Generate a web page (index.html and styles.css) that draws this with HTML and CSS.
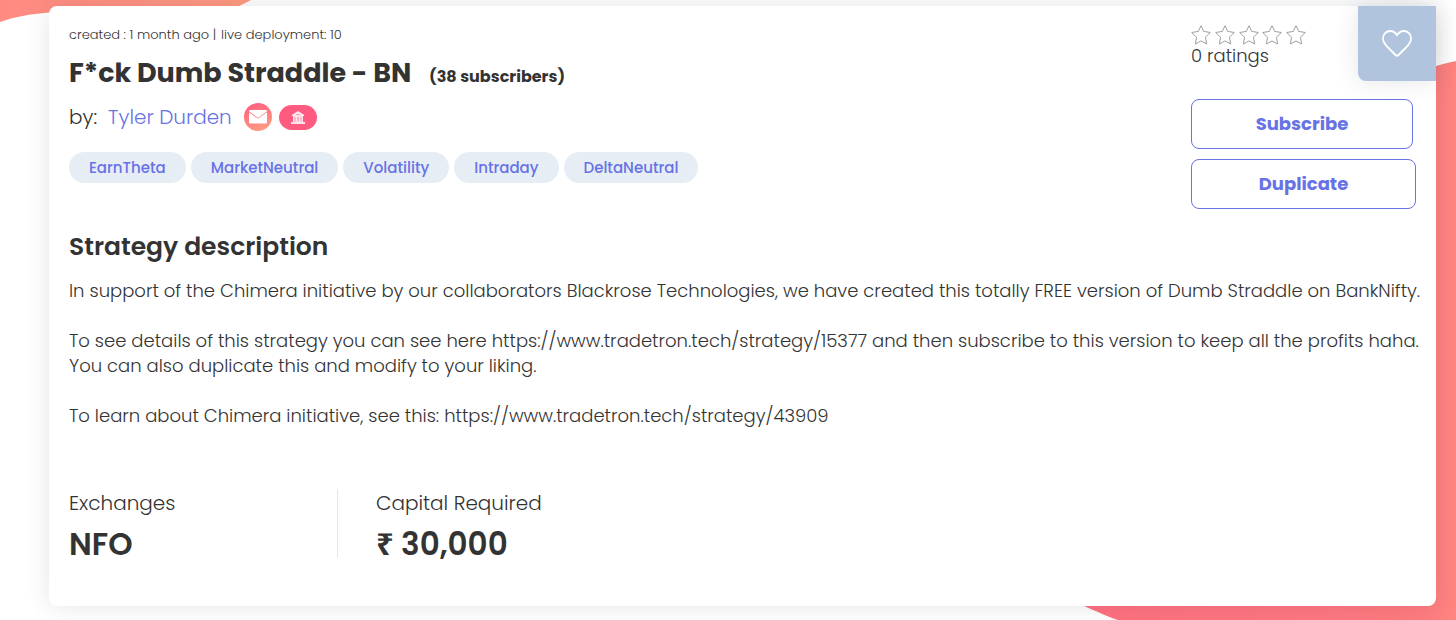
FILE: index.html
```html
<!DOCTYPE html>
<html lang="en">
<head>
<meta charset="utf-8">
<meta name="viewport" content="width=device-width, initial-scale=1">
<title>F*ck Dumb Straddle - BN</title>
<link rel="stylesheet" href="styles.css">
</head>
<body>
<svg class="blob blob-left" viewBox="0 0 260 30" aria-hidden="true">
  <defs><linearGradient id="coral" x1="0" y1="0" x2="1" y2="0"><stop offset="0" stop-color="#ff8a82"/><stop offset="1" stop-color="#ff9a80"/></linearGradient></defs>
  <path fill="url(#coral)" d="M0 0H251C240 6 225 14 190 17C150 20 85 10 49 12.500C30 14 14 17 0 22Z"/>
</svg>
<svg class="blob blob-right" viewBox="0 0 380 560" aria-hidden="true">
  <defs><linearGradient id="rose" x1="0" y1="0" x2="1" y2="0"><stop offset="0" stop-color="#ff7080"/><stop offset="0.900" stop-color="#ff7b80"/><stop offset="1" stop-color="#ff8580"/></linearGradient></defs>
  <path fill="url(#rose)" d="M380 1C372 3 366 4 360 6C160 60 60 200 0 520C0 536 4 544 8 546C20 551 32 557 42 560H380Z"/>
</svg>
<main class="card">
  <button class="favorite" type="button" aria-label="Add to favorites">
    <svg width="30" height="28" viewBox="0 0 30 28" fill="none" stroke="#fff" stroke-width="1.800" stroke-linejoin="round" aria-hidden="true"><path d="M15 5.200C12.500 1.300 10.500 1 8.500 1C4 1 1 4.200 1 8.500C1 12.500 3.500 15 6 17.500L13.500 25Q15 26.500 16.500 25L24 17.500C26.500 15 29 12.500 29 8.500C29 4.200 26 1 21.500 1C19.500 1 17.500 1.300 15 5.200Z"/></svg>
  </button>
  <header class="top">
    <div class="intro">
      <p class="meta"><span>created : 1 month ago |</span><span>live deployment: 10</span></p>
      <h1 class="title">F*ck Dumb Straddle - BN <small class="subscribers">(38 subscribers)</small></h1>
      <div class="author">
        <span>by:</span>
        <a class="author-name" href="#">Tyler Durden</a>
        <a class="mail" href="#" aria-label="Send message"><svg width="18" height="14" viewBox="0 0 18 14" aria-hidden="true"><path fill="#fff" d="M1.500 0H16.500Q18 0 18 1.300L10 7.200Q9 7.900 8 7.200L0 1.300Q0 0 1.500 0ZM0 2.300L8 8.100Q9 8.800 10 8.100L18 2.300V12Q18 13.500 16.500 13.500H1.500Q0 13.500 0 12Z"/></svg></a>
        <a class="bank" href="#" aria-label="Creator profile"><svg width="14" height="13" viewBox="0 0 14 13" aria-hidden="true"><path fill="#ffe3ea" d="M7 0L13 3.700V5H1V3.700ZM2 5H12V11H2ZM0 11H14V13H0Z"/><path stroke="#ff8aa5" stroke-width="1" fill="none" d="M4 6V10.500M10 6V10.500M6 7H8M7 7V10.500M5.500 3.500H8.500"/></svg></a>
      </div>
      <ul class="tags">
        <li class="tag">EarnTheta</li>
        <li class="tag">MarketNeutral</li>
        <li class="tag">Volatility</li>
        <li class="tag">Intraday</li>
        <li class="tag">DeltaNeutral</li>
      </ul>
    </div>
    <aside class="actions">
      <svg class="stars" width="116" height="20" viewBox="0 0 116 20" fill="none" stroke="#a0a0a0" aria-hidden="true">
        <defs><path id="star" d="M10 .700L12.700 6.400L19.300 7.500L14.500 12.200L15.600 19L10 15.900L4.400 19L5.500 12.200L.700 7.500L7.300 6.400Z"/></defs>
        <use href="#star"/><use href="#star" x="24"/><use href="#star" x="48"/><use href="#star" x="71"/><use href="#star" x="95"/>
      </svg>
      <p class="ratings">0 ratings</p>
      <button class="action subscribe" type="button">Subscribe</button>
      <button class="action" type="button">Duplicate</button>
    </aside>
  </header>
  <section class="description">
    <h2 class="section-title">Strategy description</h2>
    <p>In support of the Chimera initiative by our collaborators Blackrose Technologies, we have created this totally FREE version of Dumb Straddle on BankNifty.</p>
    <p>To see details of this strategy you can see here https://www.tradetron.tech/strategy/15377 and then subscribe to this version to keep all the profits haha.<br>You can also duplicate this and modify to your liking.</p>
    <p>To learn about Chimera initiative, see this: https://www.tradetron.tech/strategy/43909</p>
  </section>
  <dl class="stats">
    <div class="stat"><dt>Exchanges</dt><dd>NFO</dd></div>
    <div class="stat"><dt>Capital Required</dt><dd><span class="currency">₹</span> 30,000</dd></div>
  </dl>
</main>
</body>
</html>
```
FILE: styles.css
```css
* { box-sizing: border-box; }
body {
  margin: 0;
  padding: 6px 20px 14px 49px;
  position: relative;
  overflow-x: hidden;
  background: #fff;
  color: #333;
  font-family: Poppins, Inter, "Noto Sans", sans-serif;
  font-size: 18px;
  font-weight: 300;
}
h1, h2, p, ul, dl, dd { margin: 0; padding: 0; }
a { text-decoration: none; }
button { font: inherit; cursor: pointer; }
.blob { position: absolute; z-index: -1; }
.blob-left { top: 0; left: 0; width: 260px; height: 30px; }
.blob-right { bottom: 0; right: 0; width: 380px; height: 560px; }
.card {
  position: relative;
  padding: 19px 20px 48px;
  background: #fff;
  border-radius: 8px;
  box-shadow: 0 0 25px rgba(31, 45, 61, 0.12);
}
.favorite {
  position: absolute;
  top: 0;
  right: 0;
  display: grid;
  place-items: center;
  width: 78px;
  height: 75px;
  padding: 0;
  border: 0;
  border-radius: 0 0 0 8px;
  background: #b0c4de;
  box-shadow: 0 0 25px rgba(31, 45, 61, 0.12);
}
.top { display: flex; justify-content: space-between; gap: 20px; }
.meta { display: flex; gap: 5px; font-size: 13px; line-height: 20px; }
.title { margin-top: 8px; font-size: 27px; font-weight: 700; line-height: 40px; }
.subscribers { margin-left: 12px; font-size: 16px; line-height: 1; }
.author { display: flex; align-items: center; margin-top: 9px; font-size: 20px; line-height: 30px; }
.author-name { margin: 0 12px 0 11px; color: #6772e5; }
.mail, .bank { display: grid; place-items: center; }
.mail { width: 28px; height: 28px; border-radius: 50%; background: linear-gradient(160deg, #ff5a80, #ffa382); }
.bank { width: 38px; height: 25px; margin-left: 7px; border-radius: 13px; background: #ff5a80; }
.tags { display: flex; flex-wrap: wrap; gap: 5px; margin-top: 20px; list-style: none; }
.tag { padding: 0 20px; border-radius: 16px; background: #e6edf5; color: #6772e5; font-size: 15px; font-weight: 500; line-height: 31px; }
.actions { display: flex; flex-direction: column; width: 225px; }
.ratings { line-height: 22px; }
.action {
  height: 50px;
  margin-top: 10px;
  padding: 0 0 2px;
  border: 1px solid #6772e5;
  border-radius: 8px;
  background: #fff;
  color: #6772e5;
  font-weight: 700;
}
.subscribe { margin-top: 32px; margin-right: 3px; }
.description { margin: 20px -10px 0 0; line-height: 25px; }
.section-title { margin-bottom: 13px; font-size: 25px; font-weight: 600; line-height: 36px; }
.description p + p { margin-top: 25px; }
.stats { display: flex; margin-top: 61px; }
.stat { height: 69px; }
.stat:first-child { width: 269px; border-right: 1px solid #e6e6e6; }
.stat + .stat { padding-left: 38px; }
.stat dt { font-size: 20px; line-height: 28px; }
.stat dd { margin-top: 6px; font-size: 31px; font-weight: 600; line-height: 42px; }
.currency { font-family: "Noto Sans", sans-serif; font-weight: 700; line-height: 1; }
```
